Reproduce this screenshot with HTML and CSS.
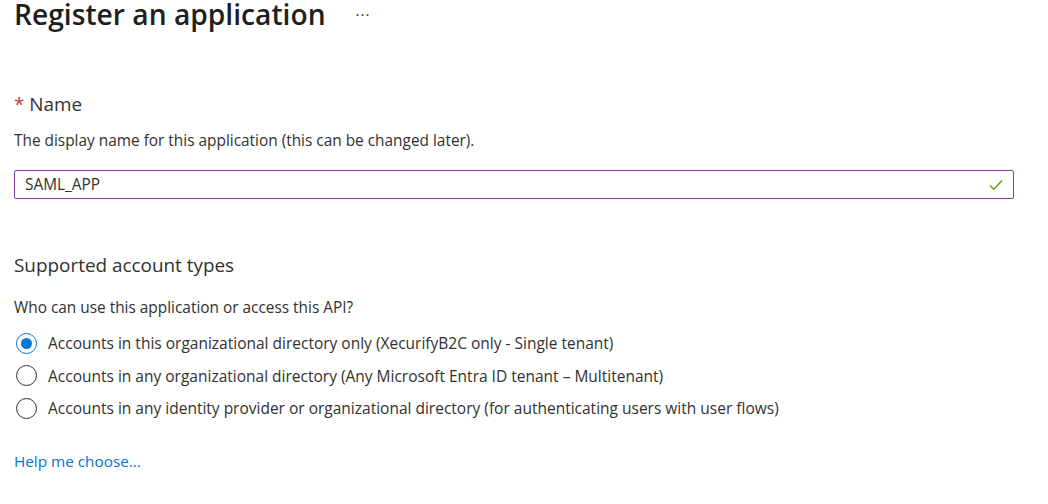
FILE: index.html
```html
<!DOCTYPE html>
<html lang="en">
<head>
<meta charset="utf-8">
<title>Register an application</title>
<link rel="stylesheet" href="styles.css">
</head>
<body>
<div class="page">
  <div class="title-row">
    <h1 class="title">Register an application</h1>
    <span class="more">&middot;&middot;&middot;</span>
  </div>

  <div class="label name-label"><span class="req">*</span> Name</div>
  <p class="desc">The display name for this application (this can be changed later).</p>
  <div class="input">
    <span class="input-value">SAML_APP</span>
    <svg class="check" width="14" height="12" viewBox="0 0 14 12"><path d="M1 6.5 L4.8 10.2 L13 1.5" fill="none" stroke="#57a300" stroke-width="1.3"/></svg>
  </div>

  <div class="label section-label">Supported account types</div>
  <p class="desc who">Who can use this application or access this API?</p>
  <div class="radios">
    <div class="radio-row"><span class="radio checked"></span><span>Accounts in this organizational directory only (XecurifyB2C only - Single tenant)</span></div>
    <div class="radio-row"><span class="radio"></span><span>Accounts in any organizational directory (Any Microsoft Entra ID tenant – Multitenant)</span></div>
    <div class="radio-row"><span class="radio"></span><span>Accounts in any identity provider or organizational directory (for authenticating users with user flows)</span></div>
  </div>
  <a class="help" href="#">Help me choose...</a>
</div>
</body>
</html>
```
FILE: styles.css
```css
html, body {
  margin: 0;
  padding: 0;
  background: #ffffff;
}
body {
  font-family: "Open Sans", "Noto Sans", "Liberation Sans", sans-serif;
  color: #323130;
  overflow: hidden;
}
.page {
  padding: 0 34px 0 14px;
  display: flex;
  flex-direction: column;
  align-items: flex-start;
}
.title-row {
  display: flex;
  align-items: center;
  height: 30px;
  width: 100%;
}
.title {
  margin: -2px 0 0 0;
  font-size: 28.2px;
  font-weight: 600;
  line-height: 30px;
  color: #201f1e;
}
.more {
  margin-left: 30px;
  font-size: 15px;
  line-height: 14px;
  color: #323130;
  letter-spacing: 1px;
  margin-top: -2px;
}
.label {
  font-size: 18.9px;
  line-height: 24px;
  color: #323130;
}
.name-label {
  margin-top: 62px;
}
.req {
  color: #d13438;
}
.desc {
  margin: 15px 0 0 0;
  font-size: 15.4px;
  line-height: 20px;
}
.input {
  margin-top: 19px;
  align-self: stretch;
  height: 29px;
  box-sizing: border-box;
  border: 1px solid #8a3f9f;
  border-radius: 2px;
  display: flex;
  align-items: center;
  justify-content: space-between;
  padding: 0 10px 0 10px;
  font-size: 15.4px;
}
.check {
  display: block;
}
.section-label {
  margin-top: 54px;
}
.who {
  margin-top: 21px;
}
.radios {
  margin-top: 15px;
  display: flex;
  flex-direction: column;
  gap: 12.5px;
}
.radio-row {
  display: flex;
  align-items: center;
  gap: 11px;
  height: 20px;
  font-size: 15.5px;
  line-height: 20px;
}
.radio {
  width: 21px;
  height: 21px;
  box-sizing: border-box;
  border: 1px solid #323130;
  border-radius: 50%;
  margin-left: 2px;
  display: flex;
  align-items: center;
  justify-content: center;
}
.radio.checked {
  border-color: #0078d4;
}
.radio.checked::after {
  content: "";
  width: 11px;
  height: 11px;
  border-radius: 50%;
  background: #0078d4;
}
.help {
  margin-top: 33px;
  font-size: 15.3px;
  line-height: 20px;
  color: #0078d4;
  text-decoration: none;
}
```
